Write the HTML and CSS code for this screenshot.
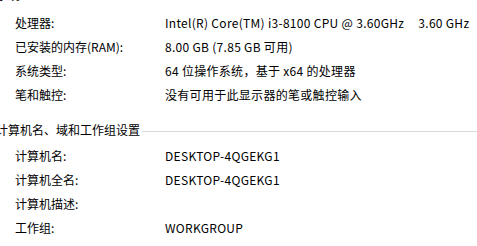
FILE: index.html
```html
<!DOCTYPE html>
<html lang="zh-CN">
<head>
<meta charset="utf-8">
<title>系统</title>
<link rel="stylesheet" href="styles.css">
</head>
<body>
<section class="group group-first">
  <div class="group-head"><span class="group-title">系统</span><span class="rule"></span></div>
  <div class="rows">
    <div class="row"><span class="label">处理器:</span><span class="value">Intel(R) Core(TM) i3-8100 CPU @ 3.60GHz<span class="speed">3.60 GHz</span></span></div>
    <div class="row"><span class="label">已安装的内存(RAM):</span><span class="value">8.00 GB (7.85 GB 可用)</span></div>
    <div class="row"><span class="label">系统类型:</span><span class="value">64 位操作系统，基于 x64 的处理器</span></div>
    <div class="row"><span class="label">笔和触控:</span><span class="value">没有可用于此显示器的笔或触控输入</span></div>
  </div>
</section>
<section class="group">
  <div class="group-head"><span class="group-title">计算机名、域和工作组设置</span><span class="rule"></span></div>
  <div class="rows">
    <div class="row"><span class="label">计算机名:</span><span class="value">DESKTOP-4QGEKG1</span></div>
    <div class="row"><span class="label">计算机全名:</span><span class="value">DESKTOP-4QGEKG1</span></div>
    <div class="row"><span class="label">计算机描述:</span><span class="value"></span></div>
    <div class="row"><span class="label">工作组:</span><span class="value">WORKGROUP</span></div>
  </div>
</section>
</body>
</html>
```
FILE: styles.css
```css
html, body {
  margin: 0;
  padding: 0;
  background: #ffffff;
  overflow: hidden;
}
body {
  font-family: "Noto Sans CJK SC", "Noto Sans", sans-serif;
  font-size: 12px;
  color: #000000;
  width: 477px;
  height: 246px;
}
.group {
  display: flex;
  flex-direction: column;
  margin-top: 11px;
}
.group-first {
  margin-top: -17px;
}
.group-first .rows {
  margin-top: 4px;
}
.group-head {
  display: flex;
  align-items: center;
  height: 24px;
  line-height: 24px;
  margin-left: -4px;
}
.group-title {
  white-space: nowrap;
}
.rule {
  flex: 1;
  height: 0;
  border-top: 1px solid #d9d9d9;
  margin-left: 2px;
  margin-top: 2px;
}
.rows {
  display: flex;
  flex-direction: column;
  margin-top: 2px;
  padding-left: 15px;
}
.row {
  display: grid;
  grid-template-columns: 150px 1fr;
  height: 24px;
  line-height: 24px;
  white-space: nowrap;
}
.value {
  letter-spacing: 0.3px;
}
.speed {
  margin-left: 14px;
}
```
